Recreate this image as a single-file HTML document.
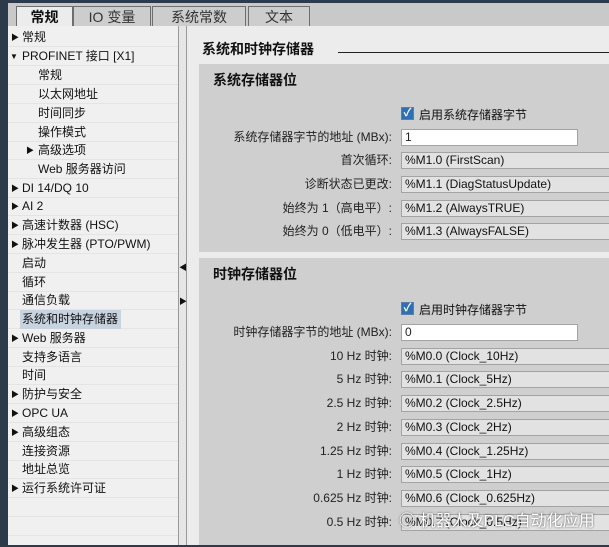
<!DOCTYPE html>
<html><head><meta charset="utf-8"><style>
*{margin:0;padding:0;box-sizing:border-box}
body{width:609px;height:547px;overflow:hidden;background:#2d3a4b;font-family:"Liberation Sans","Noto Sans CJK SC",sans-serif;font-size:12px;color:#111;position:relative}
.abs{position:absolute}
.tabstrip{left:8px;top:0;width:601px;height:26px;background:#c9c9c9;border-top:3px solid #2d3a4b}
.tab{position:absolute;top:3px;height:23px;background:#cdcdcd;border:1px solid #6e6e6e;border-bottom:none;font-size:14px;color:#333;text-align:center;line-height:21px}
.tab.act{background:#ececec;font-weight:bold;color:#111;height:24px}
.tree{left:8px;top:26px;width:170px;height:519px;background:#f0f0f0}
.row{position:absolute;left:0;width:170px;height:19px;line-height:19px;border-bottom:1px solid #e4e4e4;white-space:nowrap}
.row .t{position:absolute}
.arr{position:absolute;font-size:8px;color:#111}
.sel{background:#c8d3e0}
.split{left:178px;top:26px;width:9px;height:519px;background:#e6e6e6;border-left:1px solid #9a9a9a;border-right:1px solid #9a9a9a}
.content{left:187px;top:26px;width:422px;height:519px;background:#ececec}
.panel{position:absolute;left:12px;width:420px;background:#cfcfcf}
.h2{position:absolute;left:14px;font-size:14px;font-weight:bold}
.lbl{position:absolute;right:227px;height:17px;line-height:17px;font-size:12px;text-align:right;white-space:nowrap;color:#222}
.inp{position:absolute;left:202px;height:17px;border:1px solid #a3a3a3;background:#e2e2e2;font-size:12px;line-height:15px;padding-left:3px;white-space:nowrap;width:230px}
.inp.w{background:#fff;width:177px;color:#222}
.cb{position:absolute;left:202px;width:13px;height:13px;background:#2f6fb3;border:1px solid #5b7ea6;color:#fff;font-size:11px;line-height:11px;text-align:center;font-weight:bold}
.cbl{position:absolute;left:220px;font-size:12px}
</style></head><body>
<div class="abs tabstrip">
 <div class="tab act" style="left:8px;width:57px">常规</div>
 <div class="tab" style="left:65px;width:78px">IO 变量</div>
 <div class="tab" style="left:144px;width:94px">系统常数</div>
 <div class="tab" style="left:240px;width:62px">文本</div>
</div>
<div class="abs tree">
 <div class="row" style="top:2px"><span class="arr" style="left:3px">▶</span><span class="t" style="left:14px">常规</span></div>
 <div class="row" style="top:21px"><span class="arr" style="left:2px">▼</span><span class="t" style="left:14px">PROFINET 接口 [X1]</span></div>
 <div class="row" style="top:40px"><span class="t" style="left:30px">常规</span></div>
 <div class="row" style="top:59px"><span class="t" style="left:30px">以太网地址</span></div>
 <div class="row" style="top:78px"><span class="t" style="left:30px">时间同步</span></div>
 <div class="row" style="top:97px"><span class="t" style="left:30px">操作模式</span></div>
 <div class="row" style="top:115px"><span class="arr" style="left:18px">▶</span><span class="t" style="left:30px">高级选项</span></div>
 <div class="row" style="top:134px"><span class="t" style="left:30px">Web 服务器访问</span></div>
 <div class="row" style="top:153px"><span class="arr" style="left:3px">▶</span><span class="t" style="left:14px">DI 14/DQ 10</span></div>
 <div class="row" style="top:171px"><span class="arr" style="left:3px">▶</span><span class="t" style="left:14px">AI 2</span></div>
 <div class="row" style="top:190px"><span class="arr" style="left:3px">▶</span><span class="t" style="left:14px">高速计数器 (HSC)</span></div>
 <div class="row" style="top:209px"><span class="arr" style="left:3px">▶</span><span class="t" style="left:14px">脉冲发生器 (PTO/PWM)</span></div>
 <div class="row" style="top:228px"><span class="t" style="left:14px">启动</span></div>
 <div class="row" style="top:247px"><span class="t" style="left:14px">循环</span></div>
 <div class="row" style="top:265px"><span class="t" style="left:14px">通信负载</span></div>
 <div class="row" style="top:284px"><span class="t sel" style="left:12px;padding:0 3px 0 2px">系统和时钟存储器</span></div>
 <div class="row" style="top:303px"><span class="arr" style="left:3px">▶</span><span class="t" style="left:14px">Web 服务器</span></div>
 <div class="row" style="top:322px"><span class="t" style="left:14px">支持多语言</span></div>
 <div class="row" style="top:340px"><span class="t" style="left:14px">时间</span></div>
 <div class="row" style="top:359px"><span class="arr" style="left:3px">▶</span><span class="t" style="left:14px">防护与安全</span></div>
 <div class="row" style="top:378px"><span class="arr" style="left:3px">▶</span><span class="t" style="left:14px">OPC UA</span></div>
 <div class="row" style="top:397px"><span class="arr" style="left:3px">▶</span><span class="t" style="left:14px">高级组态</span></div>
 <div class="row" style="top:416px"><span class="t" style="left:14px">连接资源</span></div>
 <div class="row" style="top:434px"><span class="t" style="left:14px">地址总览</span></div>
 <div class="row" style="top:453px"><span class="arr" style="left:3px">▶</span><span class="t" style="left:14px">运行系统许可证</span></div>
 <div class="row" style="top:472px"></div><div class="row" style="top:491px"></div>
</div>
<div class="abs split"><span class="abs" style="left:0;top:236px;font-size:8px">◀</span><span class="abs" style="left:0;top:270px;font-size:8px">▶</span></div>
<div class="abs content">
 <div class="abs" style="left:15px;top:13px;font-size:14px;font-weight:bold">系统和时钟存储器</div>
 <div class="abs" style="left:151px;top:26px;width:271px;height:1px;background:#222"></div>
 <div class="panel" style="top:38px;height:188px">
  <div class="h2" style="top:6px">系统存储器位</div>
  <div class="cb" style="top:43px">✓</div><div class="cbl" style="top:42px">启用系统存储器字节</div>
  <div class="lbl" style="top:65px">系统存储器字节的地址 (MBx):</div><div class="inp w" style="top:65px">1</div>
  <div class="lbl" style="top:88px">首次循环:</div><div class="inp" style="top:88px">%M1.0 (FirstScan)</div>
  <div class="lbl" style="top:112px">诊断状态已更改:</div><div class="inp" style="top:112px">%M1.1 (DiagStatusUpdate)</div>
  <div class="lbl" style="top:136px">始终为 1（高电平）:</div><div class="inp" style="top:136px">%M1.2 (AlwaysTRUE)</div>
  <div class="lbl" style="top:159px">始终为 0（低电平）:</div><div class="inp" style="top:159px">%M1.3 (AlwaysFALSE)</div>
 </div>
 <div class="panel" style="top:232px;height:287px">
  <div class="h2" style="top:6px">时钟存储器位</div>
  <div class="cb" style="top:44px">✓</div><div class="cbl" style="top:43px">启用时钟存储器字节</div>
  <div class="lbl" style="top:66px">时钟存储器字节的地址 (MBx):</div><div class="inp w" style="top:66px">0</div>
  <div class="lbl" style="top:90px">10 Hz 时钟:</div><div class="inp" style="top:90px">%M0.0 (Clock_10Hz)</div>
  <div class="lbl" style="top:113px">5 Hz 时钟:</div><div class="inp" style="top:113px">%M0.1 (Clock_5Hz)</div>
  <div class="lbl" style="top:137px">2.5 Hz 时钟:</div><div class="inp" style="top:137px">%M0.2 (Clock_2.5Hz)</div>
  <div class="lbl" style="top:161px">2 Hz 时钟:</div><div class="inp" style="top:161px">%M0.3 (Clock_2Hz)</div>
  <div class="lbl" style="top:185px">1.25 Hz 时钟:</div><div class="inp" style="top:185px">%M0.4 (Clock_1.25Hz)</div>
  <div class="lbl" style="top:208px">1 Hz 时钟:</div><div class="inp" style="top:208px">%M0.5 (Clock_1Hz)</div>
  <div class="lbl" style="top:232px">0.625 Hz 时钟:</div><div class="inp" style="top:232px">%M0.6 (Clock_0.625Hz)</div>
  <div class="lbl" style="top:256px">0.5 Hz 时钟:</div><div class="inp" style="top:256px">%M0.7 (Clock_0.5Hz)</div>
  <div class="abs" style="left:200px;top:249px;font-size:16px;color:#fff;text-shadow:0 0 2px #444;white-space:nowrap">◎ 机器人及PLC自动化应用</div>
 </div>
</div>
</body></html>
